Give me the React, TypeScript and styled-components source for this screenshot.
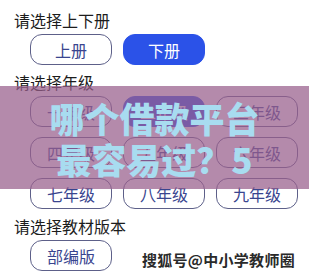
import React from "react";
import styled, { createGlobalStyle } from "styled-components";

const Global = createGlobalStyle`
  html, body { margin: 0; padding: 0; background: #ffffff; }
  body { font-family: "Noto Sans CJK SC", "Noto Sans", sans-serif; }
`;

const Page = styled.div`
  position: relative;
  width: 309px;
  height: 277px;
  overflow: hidden;
  background: #ffffff;
  box-sizing: border-box;
  padding: 9px 0 0 14px;
  display: flex;
  flex-direction: column;
  gap: 6px;
`;

const Section = styled.section`
  display: flex;
  flex-direction: column;
  gap: 3px;
`;

const Label = styled.div`
  font-size: 16px;
  line-height: 22px;
  height: 22px;
  color: #1c1c1c;
`;

const Grid = styled.div`
  display: grid;
  grid-template-columns: repeat(3, 82px);
  column-gap: 11px;
  row-gap: 10px;
  padding-left: 16px;
`;

const Choice = styled.div<{ $active?: boolean }>`
  box-sizing: border-box;
  height: 31px;
  border-radius: 12px;
  border: 1px solid ${(p) => (p.$active ? "#2b52e8" : "#5d6089")};
  background: ${(p) => (p.$active ? "#2b52e8" : "#ffffff")};
  color: ${(p) => (p.$active ? "#ffffff" : "#39458f")};
  display: flex;
  align-items: center;
  justify-content: center;
  font-size: 16px;
`;

const Overlay = styled.div`
  position: absolute;
  left: 0;
  top: 86px;
  width: 309px;
  height: 103px;
  background: rgba(152, 94, 140, 0.73);
  display: flex;
  flex-direction: column;
  align-items: center;
  justify-content: center;
`;

const Headline = styled.div`
  color: #a8dcf0;
  font-size: 35px;
  font-weight: 900;
  line-height: 41px;
  text-align: center;
  white-space: nowrap;
`;

const Watermark = styled.div`
  position: absolute;
  right: 14px;
  top: 249px;
  font-size: 15px;
  font-weight: 700;
  line-height: 22px;
  color: #2a2a2a;
  text-shadow: 0 0 1px #fff, 0 0 2px #fff;
  letter-spacing: 0.3px;
`;

const grades = ["一年级", "二年级", "三年级", "四年级", "五年级", "六年级", "七年级", "八年级", "九年级"];

export default function App() {
  return (
    <>
      <Global />
      <Page>
        <Section>
          <Label>请选择上下册</Label>
          <Grid>
            <Choice>上册</Choice>
            <Choice $active>下册</Choice>
          </Grid>
        </Section>
        <Section>
          <Label>请选择年级</Label>
          <Grid>
            {grades.map((g, i) => (
              <Choice key={g} $active={i === 1}>
                {g}
              </Choice>
            ))}
          </Grid>
        </Section>
        <Section>
          <Label>请选择教材版本</Label>
          <Grid>
            <Choice>部编版</Choice>
          </Grid>
        </Section>
        <Overlay>
          <Headline>哪个借款平台</Headline>
          <Headline>最容易过？5</Headline>
        </Overlay>
        <Watermark>搜狐号@中小学教师圈</Watermark>
      </Page>
    </>
  );
}
